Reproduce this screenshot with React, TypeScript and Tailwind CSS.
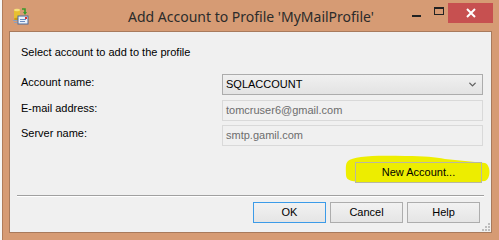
import { ChevronDown } from 'lucide-react'

const BODY = { fontFamily: '"Liberation Sans", Arial, sans-serif' }

function AppIcon() {
  return (
    <svg width="16" height="18" viewBox="0 0 16 18">
      {/* database cylinder */}
      <rect x="1" y="2" width="6" height="9" fill="#E8C030" />
      <ellipse cx="4" cy="2" rx="3" ry="1.2" fill="#F7E27A" />
      <ellipse cx="4" cy="11" rx="3" ry="1.2" fill="#C89A18" />
      {/* green arrow */}
      <path d="M9 1 h3 v4" stroke="#3A9A2A" strokeWidth="1.6" fill="none" />
      <path d="M10 4 l2 3 l2 -3 z" fill="#3A9A2A" />
      {/* envelope */}
      <rect x="5" y="8" width="10" height="8" fill="#EAF1FB" stroke="#4C6B9A" strokeWidth="1" />
      <rect x="7" y="11" width="6" height="1" fill="#6A8BC0" />
      <rect x="7" y="13" width="5" height="1" fill="#6A8BC0" />
      <rect x="12" y="9" width="2" height="2" fill="#D83030" />
      <rect x="0" y="12" width="4" height="1" fill="#8AA0C0" />
      <rect x="1" y="14" width="3" height="1" fill="#8AA0C0" />
    </svg>
  )
}

function Field({ children }: { children: React.ReactNode }) {
  return (
    <div className="h-[21px] w-[261px] flex items-center px-[3px] text-[11px] border border-[#D9D9D9] bg-[#F0F0F0] text-[#6D6D6D]">
      {children}
    </div>
  )
}

function Btn({ label, focus }: { label: string; focus?: boolean }) {
  return (
    <button
      className={`h-[21px] w-[73px] border ${
        focus ? 'border-[#3C9BE8]' : 'border-[#ADADAD]'
      } bg-gradient-to-b from-[#F2F2F2] to-[#E5E5E5] text-[11px] text-black flex items-center justify-center`}
    >
      {label}
    </button>
  )
}

export default function App() {
  return (
    <div className="w-[499px] h-[240px] flex bg-[#F6F6F6] overflow-hidden" style={BODY}>
      <div className="w-[2px]" />
      <div className="flex-1 flex flex-col bg-[#D69B74] border-l border-[#B07C5A]">
        {/* Title bar */}
        <div className="h-[32px] flex items-start relative">
          <div className="ml-[10px] mt-[8px]">
            <AppIcon />
          </div>
          <div
            className="absolute left-0 right-0 top-[6px] text-center text-[14px] text-[#2B2B2B]"
            style={{ fontFamily: '"Noto Sans", "Open Sans", sans-serif' }}
          >
            Add Account to Profile 'MyMailProfile'
          </div>
          <div className="ml-auto flex items-start mr-[6px] relative">
            <div className="w-[26px] h-[20px] mt-[3px] flex items-center justify-center">
              <div className="w-[9px] h-[2px] bg-[#222] mt-[6px]" />
            </div>
            <div className="w-[19px] h-[20px] mt-[3px] flex items-center justify-center">
              <div className="w-[10px] h-[8px] border border-t-2 border-[#222] -mt-[4px]" />
            </div>
            <div className="w-[45px] h-[20px] mt-[3px] bg-[#C75050] flex items-center justify-center">
              <svg width="10" height="10" viewBox="0 0 10 10">
                <path d="M1 1 L9 9 M9 1 L1 9" stroke="white" strokeWidth="2" />
              </svg>
            </div>
          </div>
        </div>

        {/* Client area */}
        <div className="ml-[6px] mr-[7px] mb-[7px] flex-1 border border-[#A87A5C] bg-[#F0F0F0] text-[11px] text-black flex flex-col">
          <div className="pl-[11px] mt-[14px] leading-[13px]">Select account to add to the profile</div>

          <div className="flex flex-col mt-[15px]">
            <div className="flex items-start">
              <div className="pl-[11px] w-[212px] mt-[2px] leading-[13px]">Account name:</div>
              <div className="h-[21px] w-[261px] flex items-center border border-[#ACACAC] bg-gradient-to-b from-[#F0F0F0] to-[#E3E3E3] pl-[3px] pr-[4px]">
                <span className="flex-1">SQLACCOUNT</span>
                <ChevronDown size={11} strokeWidth={3} color="#606060" />
              </div>
            </div>
            <div className="flex items-start mt-[5px]">
              <div className="pl-[11px] w-[212px] mt-[2px] leading-[13px]">E-mail address:</div>
              <Field>tomcruser6@gmail.com</Field>
            </div>
            <div className="flex items-start mt-[4px]">
              <div className="pl-[11px] w-[212px] mt-[2px] leading-[13px]">Server name:</div>
              <Field>smtp.gamil.com</Field>
            </div>
          </div>

          <div className="flex justify-end pr-[9px] mt-[16px] relative">
            {/* highlighter mark */}
            <svg
              className="absolute right-0 -top-[7px]"
              width="146"
              height="29"
              viewBox="0 0 146 29"
            >
              <path
                d="M3 6 C8 1 30 0 60 1 C80 1 90 2 100 4 L140 8 C146 10 146 24 140 26 C110 28 60 28 20 27 C8 27 1 26 1 20 C1 14 0 9 3 6 Z"
                fill="#EEEE00"
              />
            </svg>
            <button className="relative h-[21px] w-[127px] border border-[#B8B8A0] bg-[#EDED00] text-[11px] text-black flex items-center justify-center">
              New Account...
            </button>
          </div>

          <div className="mx-[7px] mt-[12px] border-t border-[#A0A0A0] border-b border-b-white" />

          <div className="flex justify-end gap-[4px] pr-[11px] mt-[5px]">
            <Btn label="OK" focus />
            <Btn label="Cancel" />
            <Btn label="Help" />
          </div>
          <div className="flex-1 flex justify-end items-end pr-[1px] pb-[1px]">
            <svg width="8" height="8" viewBox="0 0 8 8">
              <rect x="6" y="0" width="2" height="2" fill="#BDBDBD" />
              <rect x="3" y="3" width="2" height="2" fill="#BDBDBD" />
              <rect x="6" y="3" width="2" height="2" fill="#BDBDBD" />
              <rect x="0" y="6" width="2" height="2" fill="#BDBDBD" />
              <rect x="3" y="6" width="2" height="2" fill="#BDBDBD" />
              <rect x="6" y="6" width="2" height="2" fill="#BDBDBD" />
            </svg>
          </div>
        </div>
      </div>
    </div>
  )
}
